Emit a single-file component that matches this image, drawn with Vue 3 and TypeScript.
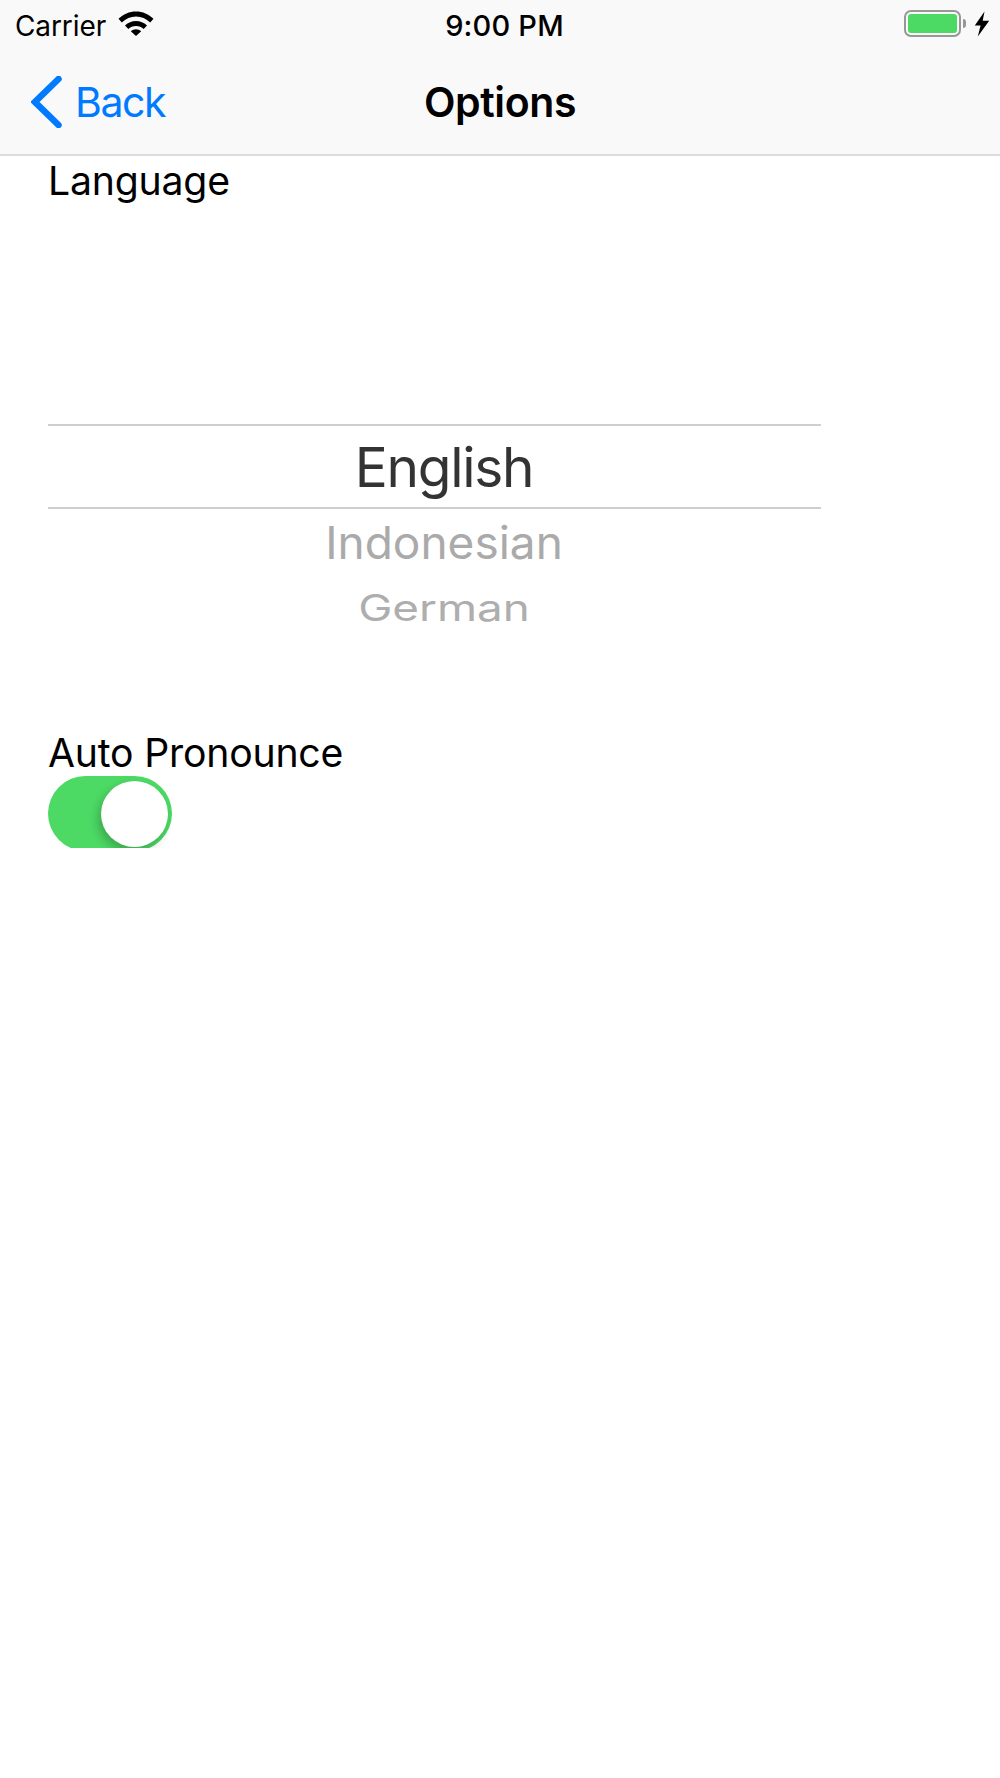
<script setup lang="ts">
const wheel: { label: string; cls: string }[] = [
  { label: 'English', cls: 'current' },
  { label: 'Indonesian', cls: 'near' },
  { label: 'German', cls: 'far' },
]
</script>

<template>
  <div class="screen">
    <header class="bar">
      <div class="status">
        <div class="status-left">
          <span class="carrier">Carrier</span>
          <svg class="wifi" width="36" height="26" viewBox="0 0 36 26">
            <path d="M0.500 8.800C5.300 4.200 11.300 1.500 18 1.500s12.700 2.700 17.500 7.300l-3.300 3.600C28.200 8.700 23.300 6.500 18 6.500S7.800 8.700 3.800 12.400z" fill="#000" />
            <path d="M7 15.400C10 12.600 13.800 11 18 11s8 1.600 11 4.400l-3.300 3.600c-2-1.900-4.700-3-7.700-3s-5.700 1.100-7.700 3z" fill="#000" />
            <path d="M12.800 21.300c1.400-1.200 3.200-2 5.200-2s3.800.8 5.200 2l-5.200 4.700z" fill="#000" />
          </svg>
        </div>
        <span class="clock">9:00 PM</span>
        <div class="status-right">
          <span class="battery"><span class="battery-fill"></span></span>
          <span class="battery-cap"></span>
          <svg class="bolt" width="16" height="26" viewBox="0 0 16 26">
            <path d="M10.500 0.500L0.800 14.600H6.600L3.800 25.500L15.200 9.800H8.700z" fill="#000" />
          </svg>
        </div>
      </div>
      <nav class="nav">
        <div class="back">
          <svg class="chevron" width="32" height="52" viewBox="0 0 32 52">
            <path d="M27.500 3L4 26l23.500 23" fill="none" stroke="#007aff" stroke-width="6.500" stroke-linecap="round" stroke-linejoin="miter" />
          </svg>
          <span>Back</span>
        </div>
        <h1 class="title">Options</h1>
      </nav>
    </header>

    <main class="content">
      <div class="label first">Language</div>
      <div class="picker">
        <div class="selection"></div>
        <div v-for="item in wheel" :key="item.label" class="row" :class="item.cls">
          <span>{{ item.label }}</span>
        </div>
      </div>
      <div class="label second">Auto Pronounce</div>
      <div class="switch-clip">
        <div class="switch">
          <div class="knob"></div>
        </div>
      </div>
    </main>
  </div>
</template>

<style scoped>
.screen {
  width: 1000px;
  height: 1778px;
  background: #fff;
  font-family: Inter, "Noto Sans", sans-serif;
  color: #000;
  overflow: hidden;
}

.bar {
  height: 156px;
  box-sizing: border-box;
  background: #f9f9f9;
  border-bottom: 2px solid #dcdcdc;
  display: flex;
  flex-direction: column;
}

.status {
  height: 52px;
  position: relative;
  display: flex;
  align-items: center;
  justify-content: space-between;
  padding: 0 10px 0 15px;
}

.status-left {
  display: flex;
  align-items: center;
  gap: 12px;
}

.carrier {
  font-size: 28px;
  letter-spacing: -0.1px;
  line-height: 52px;
}

.wifi {
  margin-top: -6px;
}

.clock {
  position: absolute;
  left: 0;
  right: 0;
  top: 0;
  text-align: center;
  font-size: 29px;
  font-weight: 500;
  letter-spacing: 0.2px;
  line-height: 52px;
  padding-left: 9px;
}

.status-right {
  display: flex;
  align-items: center;
  margin-top: -5px;
}

.battery {
  width: 57px;
  height: 27px;
  box-sizing: border-box;
  border: 2.500px solid #979797;
  border-radius: 7px;
  padding: 2px;
  display: block;
}

.battery-fill {
  display: block;
  height: 100%;
  background: #4cd964;
  border-radius: 3px;
}

.battery-cap {
  width: 3px;
  height: 9px;
  margin-left: 2px;
  background: #979797;
  border-radius: 0 4px 4px 0;
}

.bolt {
  margin-left: 8px;
}

.nav {
  flex: 1;
  position: relative;
  display: flex;
  align-items: center;
}

.back {
  display: flex;
  align-items: center;
  color: #007aff;
  font-size: 41px;
  letter-spacing: -1.400px;
  padding-left: 31px;
  gap: 12px;
  margin-top: -2px;
}

.chevron {
  display: block;
}

.title {
  position: absolute;
  left: 0;
  right: 0;
  margin: 0;
  text-align: center;
  font-size: 41px;
  font-weight: 600;
  letter-spacing: -0.4px;
  margin-top: -2px;
}

.content {
  padding-left: 48px;
  width: 773px;
}

.label {
  font-size: 39.200px;
  line-height: 46px;
  letter-spacing: -0.2px;
}

.first {
  margin-top: 2px;
}

.picker {
  position: relative;
  height: 526px;
  padding-top: 220px;
  box-sizing: border-box;
  text-align: center;
}

.selection {
  position: absolute;
  left: 0;
  right: 0;
  top: 220px;
  height: 85px;
  box-sizing: border-box;
  border-top: 2px solid #cfcfcf;
  border-bottom: 2px solid #cfcfcf;
}

.row {
  display: flex;
  justify-content: center;
  align-items: center;
  box-sizing: border-box;
  padding-left: 19px;
}

.row span {
  display: block;
}

.current {
  height: 85px;
  font-size: 55px;
  color: #333;
  letter-spacing: -1.300px;
}

.near {
  height: 64px;
  padding-top: 2px;
  font-size: 46px;
  color: #aaa;
}

.near span {
  transform: scaleY(0.98);
}

.far {
  height: 69px;
  font-size: 45.800px;
  color: #aeaeae;
}

.far span {
  transform: scaleY(0.8);
}

.second {
  margin-top: 0;
}

.switch-clip {
  width: 124px;
  height: 72px;
  overflow: hidden;
}

.switch {
  width: 124px;
  height: 75px;
  border-radius: 38px;
  background: #4cd964;
  position: relative;
}

.knob {
  position: absolute;
  right: 4px;
  top: 5px;
  width: 67px;
  height: 66px;
  border-radius: 50%;
  background: #fff;
  box-shadow: -3px 5px 10px rgba(0, 0, 0, 0.22);
}
</style>
